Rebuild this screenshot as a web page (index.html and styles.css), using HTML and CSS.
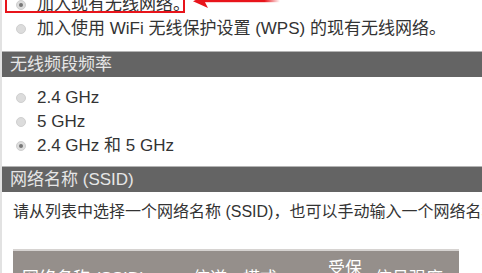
FILE: index.html
```html
<!DOCTYPE html>
<html lang="zh-CN">
<head>
<meta charset="utf-8">
<title>无线设置</title>
<link rel="stylesheet" href="styles.css">
</head>
<body>
<div class="page">
  <div class="group group-top">
    <div class="opt"><span class="radio on"></span><span>加入现有无线网络。</span></div>
    <div class="opt"><span class="radio"></span><span>加入使用 WiFi 无线保护设置 (WPS) 的现有无线网络。</span></div>
    <div class="mark-box"></div>
    <svg class="mark-arrow" width="90" height="16" viewBox="0 0 90 16">
      <defs>
        <linearGradient id="fade" x1="0" x2="1" y1="0" y2="0">
          <stop offset="0" stop-color="#e8141b"/>
          <stop offset="0.8" stop-color="#e8141b"/>
          <stop offset="1" stop-color="#e8141b" stop-opacity="0"/>
        </linearGradient>
      </defs>
      <rect x="10" y="6" width="78" height="2.2" fill="url(#fade)"/>
      <path d="M1 7.2 L16 0.5 L12.5 7.2 L16 14 Z" fill="#e8141b"/>
    </svg>
  </div>
  <div class="bar">无线频段频率</div>
  <div class="group group-band">
    <div class="opt"><span class="radio"></span><span>2.4 GHz</span></div>
    <div class="opt"><span class="radio"></span><span>5 GHz</span></div>
    <div class="opt"><span class="radio on"></span><span>2.4 GHz 和 5 GHz</span></div>
  </div>
  <div class="bar">网络名称 (SSID)</div>
  <p class="hint">请从列表中选择一个网络名称 (SSID)，也可以手动输入一个网络名称。</p>
  <table class="list">
    <thead>
      <tr>
        <th class="c-ssid">网络名称 (SSID)</th>
        <th class="c-ch">信道</th>
        <th class="c-mode">模式</th>
        <th class="c-sec">受保<br>护</th>
        <th class="c-sig">信号强度</th>
      </tr>
    </thead>
  </table>
</div>
</body>
</html>
```
FILE: styles.css
```css
html, body {
  margin: 0;
  padding: 0;
  background: #ffffff;
  overflow: hidden;
}
body {
  width: 482px;
  height: 273px;
  font-family: "Liberation Sans", "Noto Sans CJK SC", sans-serif;
  color: #333333;
}
.page {
  margin-top: -7px;
  border-left: 2px solid #e2e2e2;
  min-height: 300px;
}
.group {
  position: relative;
  display: flex;
  flex-direction: column;
}
.group-top {
  padding-bottom: 10px;
}
.group-band {
  padding-top: 9px;
  padding-bottom: 8px;
}
.opt {
  display: flex;
  align-items: center;
  height: 24px;
  padding-left: 14px;
  font-size: 17px;
  line-height: 24px;
  color: #333;
  white-space: nowrap;
}
.radio {
  width: 8px;
  height: 8px;
  border-radius: 50%;
  background: #dcdcdc;
  border: 1px solid #cfcfcf;
  margin-right: 11px;
  flex: none;
  box-sizing: content-box;
  position: relative;
}
.radio.on::after {
  content: "";
  position: absolute;
  left: 2px;
  top: 2px;
  width: 4px;
  height: 4px;
  border-radius: 50%;
  background: #777;
}
.bar {
  height: 25px;
  border-top: 1px solid #b4b4b4;
  background: #646464;
  color: #e6e6e6;
  font-size: 17px;
  line-height: 25px;
  padding-left: 8px;
  white-space: nowrap;
}
.hint {
  margin: 9px 0 0 11px;
  font-size: 16px;
  line-height: 22px;
  color: #333;
  white-space: nowrap;
}
.list {
  margin: 26px 0 0 11px;
  width: 446px;
  border-collapse: collapse;
  background: #958f8b;
  border-top: 2px solid #d6d3d1;
}
.list th {
  color: #ffffff;
  font-weight: normal;
  font-size: 17px;
  line-height: 20px;
  text-align: left;
  vertical-align: middle;
  padding: 8px 0 8px 0;
  white-space: nowrap;
}
.c-ssid { width: 171px; padding-left: 9px !important; }
.c-ch { width: 50px; }
.c-mode { width: 85px; }
.c-sec { width: 47px; }
.c-sig { }
.mark-box {
  position: absolute;
  left: 3px;
  top: -4px;
  width: 176px;
  height: 20px;
  border: 2px solid #e8141b;
}
.mark-arrow {
  position: absolute;
  left: 190px;
  top: 1px;
}
```
